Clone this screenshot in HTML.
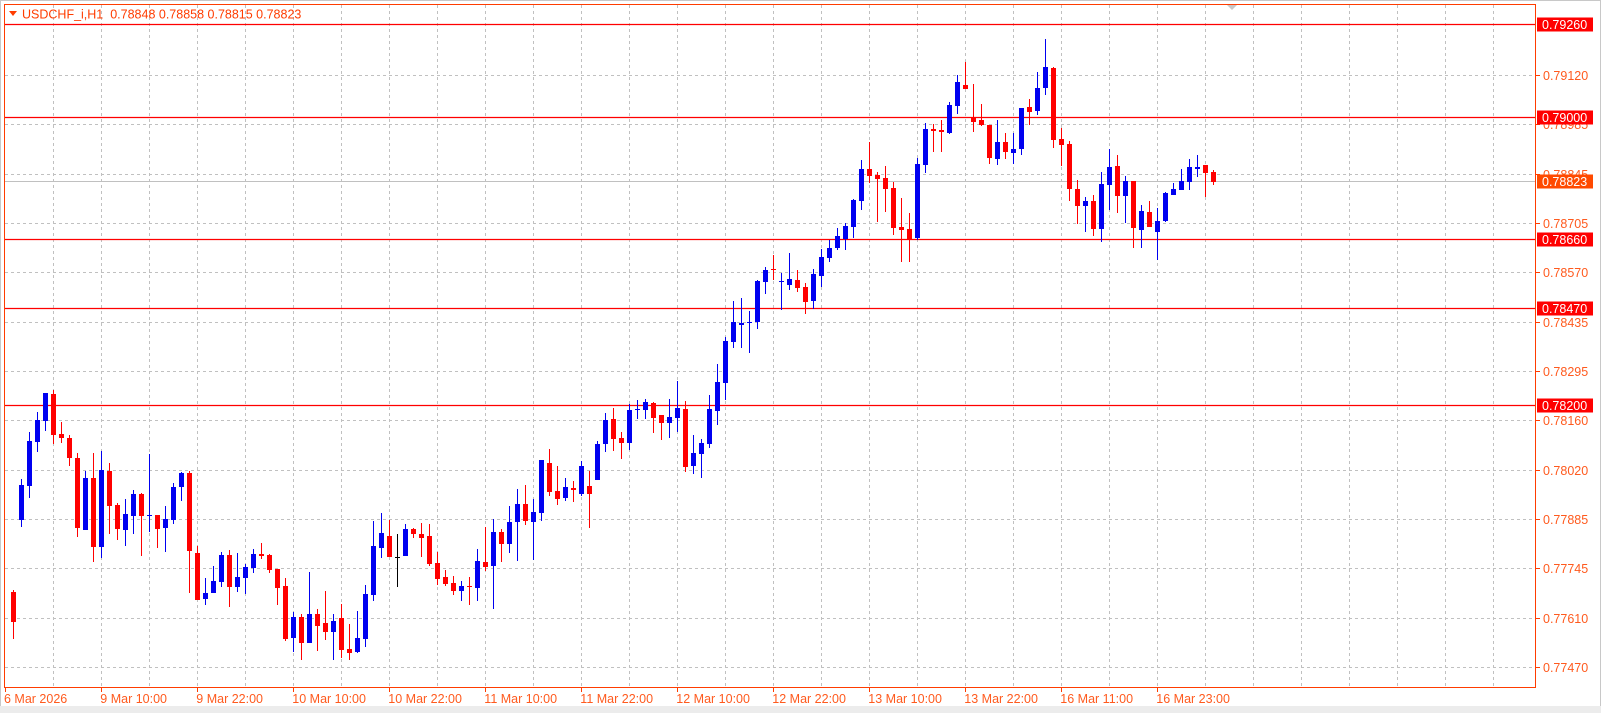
<!DOCTYPE html>
<html><head><meta charset="utf-8"><style>
html,body{margin:0;padding:0;background:#fff;width:1601px;height:713px;overflow:hidden}
svg{display:block}
text{font-family:"Liberation Sans",sans-serif;font-size:12.5px}
</style></head><body>
<svg id="s" width="1601" height="713" xmlns="http://www.w3.org/2000/svg">
<rect x="0" y="0" width="1601" height="713" fill="#fff"/>
<rect x="0" y="706" width="1601" height="7" fill="#ececec"/>
<line x1="0.5" y1="0" x2="0.5" y2="706" stroke="#c8c8c8"/>
<line x1="0" y1="0.5" x2="1601" y2="0.5" stroke="#c8c8c8"/>
<line x1="1600.5" y1="0" x2="1600.5" y2="706" stroke="#c8c8c8"/>
<g id="grid"></g>
<g id="hl"></g>
<g id="c"></g>
<rect x="4.5" y="4.5" width="1531" height="683" fill="none" stroke="#ff3c00"/>
<polygon points="1227,5 1237,5 1232,10" fill="#c8c8c8"/>
<polygon points="9,11 17,11 13,16" fill="#ff3c00"/>
<text x="22" y="18.5" fill="#ff3c00">USDCHF_i,H1&#160;&#160;0.78848 0.78858 0.78815 0.78823</text>
<g id="ax"></g>
</svg>
<script>
var NS="http://www.w3.org/2000/svg";
function el(p,t,a,txt){var e=document.createElementNS(NS,t);for(var k in a)e.setAttribute(k,a[k]);if(txt)e.textContent=txt;document.getElementById(p).appendChild(e);}
for(var n=1;n<=31;n++){var x=5.5+48*n;el("grid","line",{x1:x,y1:5,x2:x,y2:687,stroke:"#c0c0c0","stroke-dasharray":"3,3"});}
var labs=["0.79120","0.78985","0.78845","0.78705","0.78570","0.78435","0.78295","0.78160","0.78020","0.77885","0.77745","0.77610","0.77470"];
for(var i=0;i<13;i++){var y=Math.round(74.8+49.35*i)+0.5;el("grid","line",{x1:5,y1:y,x2:1535,y2:y,stroke:"#c0c0c0","stroke-dasharray":"3,3"});
el("ax","line",{x1:1536,y1:y,x2:1540,y2:y,stroke:"#ff3c00"});
el("ax","text",{x:1543,y:y+4.5,fill:"#ff5a1e"},labs[i]);}
var hls=[[24.5,"0.79260"],[117.5,"0.79000"],[239.5,"0.78660"],[308.5,"0.78470"],[405.5,"0.78200"]];
el("hl","line",{x1:5,y1:181.5,x2:1535,y2:181.5,stroke:"#c0c0c0"});
hls.forEach(function(h){el("hl","line",{x1:5,y1:h[0],x2:1535,y2:h[0],stroke:"#ff0000","stroke-width":1.3});
el("ax","rect",{x:1537,y:h[0]-7,width:56,height:14,fill:"#ff0000"});
el("ax","text",{x:1542,y:h[0]+4.5,fill:"#fff"},h[1]);});
el("ax","rect",{x:1537,y:174.5,width:56,height:14,fill:"#ff4a00"});
el("ax","text",{x:1542,y:186,fill:"#fff"},"0.78823");
var tl=[[5,"6 Mar 2026"],[101.3,"9 Mar 10:00"],[197.3,"9 Mar 22:00"],[293.3,"10 Mar 10:00"],[389.3,"10 Mar 22:00"],[485.3,"11 Mar 10:00"],[581.3,"11 Mar 22:00"],[677.3,"12 Mar 10:00"],[773.3,"12 Mar 22:00"],[869.3,"13 Mar 10:00"],[965.3,"13 Mar 22:00"],[1061.3,"16 Mar 11:00"],[1157.3,"16 Mar 23:00"]];
tl.forEach(function(t){var x=Math.round(t[0])+0.5;el("ax","line",{x1:x,y1:687,x2:x,y2:692,stroke:"#ff3c00"});
el("ax","text",{x:t[0]-1,y:703,fill:"#ff5a1e"},t[1]);});
var D="r 588 593 571 600|r 592 622 590 639|b 485 520 479 527|b 441 486 432 498|b 420 442 412 452|b 393 421 393 431|r 394 435 390 444|r 434 438 422 443|r 438 458 435 466|r 458 528 453 537|b 478 530 471 530|r 478 547 453 562|b 470 547 451 558|r 471 506 463 534|r 505 529 503 540|b 514 530 499 546|b 494 516 490 534|r 494 516 493 556|b 515 516 454 532|r 515 529 515 548|b 519 528 506 552|b 487 520 483 524|b 473 487 472 501|r 473 551 471 593|r 553 600 546 600|b 593 599 578 605|b 581 593 566 593|b 555 582 552 587|r 555 587 550 607|b 577 587 553 592|b 567 578 564 594|b 554 568 549 573|r 554 556 543 559|r 555 570 554 573|r 569 588 569 605|r 586 639 578 641|b 617 638 612 652|r 617 643 614 660|b 614 643 572 643|r 614 626 609 651|r 623 632 591 640|b 621 632 614 660|r 618 650 604 658|r 649 653 624 660|b 638 652 611 653|b 594 639 585 647|b 546 595 521 601|b 533 548 513 558|r 536 557 520 557|k 557 558 534 587|b 529 556 524 556|r 529 534 528 538|r 534 538 523 557|r 536 564 524 566|r 563 579 552 585|r 577 584 570 586|r 583 591 576 595|b 586 591 581 601|r 586 587 577 605|b 561 588 549 601|r 562 567 527 571|b 532 566 519 609|r 532 544 529 562|b 522 544 506 553|b 504 522 489 561|r 504 521 485 525|b 512 522 499 560|b 460 513 460 521|r 463 492 449 496|r 491 499 466 505|b 487 498 478 501|r 488 490 481 502|b 466 494 461 496|r 486 494 471 528|b 444 480 441 480|b 420 444 413 452|r 419 439 408 451|r 438 443 432 459|b 410 443 404 450|b 409 410 400 419|b 402 410 399 419|r 403 418 402 433|r 415 423 415 440|b 417 423 399 438|b 408 418 381 432|r 409 467 401 472|b 453 466 435 474|b 443 454 439 478|b 409 444 395 448|b 382 411 364 425|b 341 383 337 400|b 322 342 301 348|b 323 325 298 348|b 322 323 311 353|b 281 322 280 329|b 270 282 267 294|r 269 270 255 280|b 281 282 273 310|b 279 285 253 290|r 280 288 270 292|r 287 302 283 314|b 274 301 269 309|b 257 276 249 287|b 248 258 240 262|b 236 248 228 250|b 226 239 223 250|b 200 227 199 238|b 169 201 160 210|r 169 176 142 183|r 175 179 172 222|r 178 189 166 212|r 188 228 182 235|r 227 230 198 262|r 229 240 213 262|b 164 238 158 240|b 129 165 123 173|r 129 131 124 152|r 130 132 120 152|b 105 133 102 134|b 82 106 75 114|r 85 89 62 89|r 117 122 84 132|r 120 125 104 126|r 125 158 125 164|b 142 159 120 165|r 142 152 133 159|b 149 153 133 164|b 108 149 108 155|r 107 112 99 125|b 88 111 72 115|b 67 88 39 95|r 68 140 67 148|r 139 145 128 166|r 144 189 141 201|r 189 206 180 224|b 201 206 197 232|r 201 229 195 236|b 184 229 172 242|b 167 185 149 210|r 166 196 155 213|b 181 196 176 223|r 181 228 181 248|b 211 230 205 248|r 212 227 201 227|b 221 232 208 260|b 193 221 192 222|b 189 195 183 195|b 181 190 169 190|b 167 182 159 190|b 167 169 155 177|r 165 173 165 197|r 172 182 170 185";
var cols={b:"#0000f0",r:"#ff0000",k:"#000"};
D.split("|").forEach(function(s,k){var p=s.split(" ");var c=cols[p[0]];var t=+p[1],b=+p[2],h=+p[3],l=+p[4];
var cx=5+8*k;if(cx<6)return;
el("c","rect",{x:cx,y:h,width:1,height:Math.max(1,l-h),fill:c});
var bx=cx-2;var w=5;if(bx<5){w-= (5-bx);bx=5;}
el("c","rect",{x:bx,y:t,width:w,height:Math.max(1,b-t),fill:c});});
</script>
</body></html>
